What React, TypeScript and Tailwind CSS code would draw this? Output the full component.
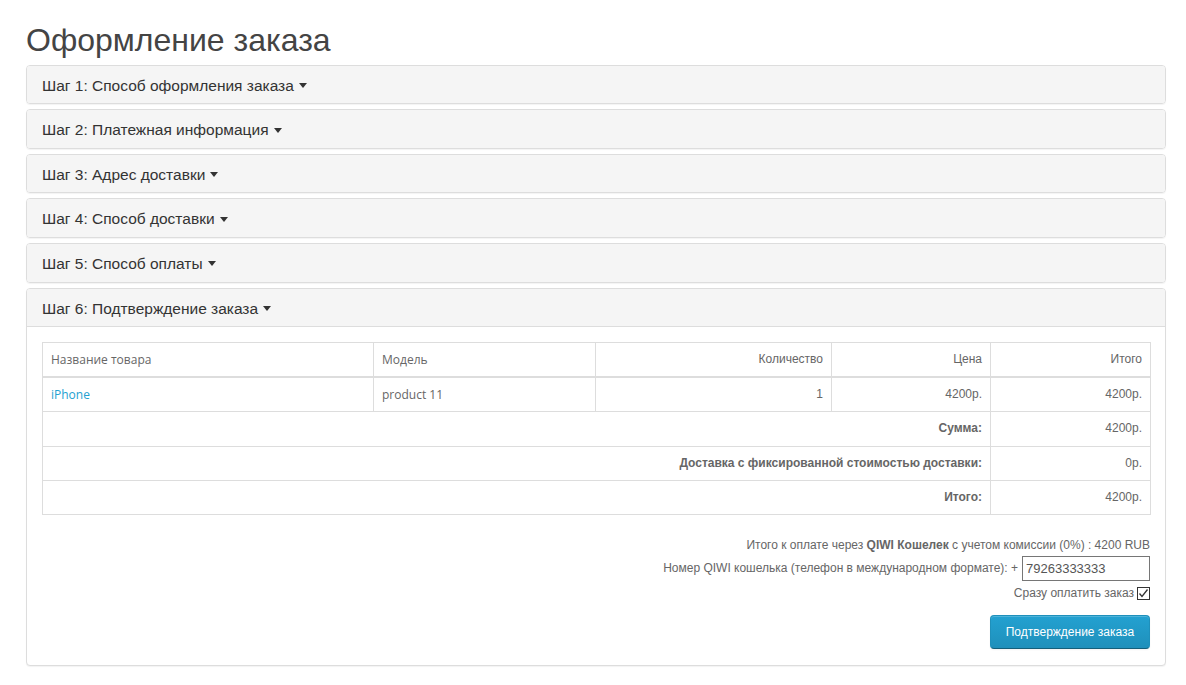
import React from "react";

const arial = { fontFamily: '"Liberation Sans", Arial, sans-serif' };

function Caret() {
  return (
    <span className="inline-block ml-[5px] align-middle w-0 h-0 border-l-[4px] border-r-[4px] border-t-[5px] border-l-transparent border-r-transparent border-t-[#333] relative top-[-1px]" />
  );
}

function PanelHeading({ title, last }: { title: string; last?: boolean }) {
  return (
    <div
      className={
        "bg-[#f5f5f5] px-[15px] py-[10px] rounded-t-[3px] " +
        (last ? "border-b border-[#ddd]" : "rounded-b-[3px]")
      }
    >
      <h4 className="text-[15.5px] leading-[17.6px] text-[#333] m-0 pt-[1px] h-[17.6px]">
        {title}
        <Caret />
      </h4>
    </div>
  );
}

const steps = [
  "Шаг 1: Способ оформления заказа",
  "Шаг 2: Платежная информация",
  "Шаг 3: Адрес доставки",
  "Шаг 4: Способ доставки",
  "Шаг 5: Способ оплаты",
];

const openSans = "font-['Open_Sans',sans-serif]";
const cell = "border border-[#ddd] p-[8px]";

export default function App() {
  return (
    <div
      className="w-[1186px] min-h-[685px] bg-white text-[12px] text-[#666]"
      style={arial}
    >
      <div className="pl-[26px] pr-[20px] pt-[21px]">
        <h1 className="text-[32px] leading-[39.6px] text-[#444] font-normal mb-[4px] ml-[0px]">
          Оформление заказа
        </h1>
        <div className="flex flex-col gap-[5px]">
          {steps.map((s) => (
            <div
              key={s}
              className="border border-[#ddd] rounded-[4px] shadow-[0_1px_1px_rgba(0,0,0,0.05)]"
            >
              <PanelHeading title={s} />
            </div>
          ))}
          <div className="border border-[#ddd] rounded-[4px] shadow-[0_1px_1px_rgba(0,0,0,0.05)] bg-white">
            <PanelHeading title="Шаг 6: Подтверждение заказа" last />
            <div className="p-[15px] pb-[16px]">
              <table className="w-full table-fixed border-collapse border border-[#ddd] mb-[20px] leading-[1.42857]">
                <colgroup>
                  <col className="w-[331px]" />
                  <col className="w-[222px]" />
                  <col className="w-[236px]" />
                  <col className="w-[159px]" />
                  <col className="w-[160px]" />
                </colgroup>
                <thead>
                  <tr>
                    <td className={cell + " border-b-2 text-left " + openSans}>Название товара</td>
                    <td className={cell + " border-b-2 text-left " + openSans}>Модель</td>
                    <td className={cell + " border-b-2 text-right"}>Количество</td>
                    <td className={cell + " border-b-2 text-right"}>Цена</td>
                    <td className={cell + " border-b-2 text-right"}>Итого</td>
                  </tr>
                </thead>
                <tbody>
                  <tr>
                    <td className={cell + " text-left " + openSans}>
                      <a className="text-[#23a1d1]" href="#">
                        iPhone
                      </a>
                    </td>
                    <td className={cell + " text-left " + openSans}>product 11</td>
                    <td className={cell + " text-right"}>1</td>
                    <td className={cell + " text-right"}>4200р.</td>
                    <td className={cell + " text-right"}>4200р.</td>
                  </tr>
                  <tr>
                    <td colSpan={4} className={cell + " text-right font-bold"}>
                      Сумма:
                    </td>
                    <td className={cell + " text-right"}>4200р.</td>
                  </tr>
                  <tr>
                    <td colSpan={4} className={cell + " text-right font-bold"}>
                      Доставка с фиксированной стоимостью доставки:
                    </td>
                    <td className={cell + " text-right"}>0р.</td>
                  </tr>
                  <tr>
                    <td colSpan={4} className={cell + " text-right font-bold"}>
                      Итого:
                    </td>
                    <td className={cell + " text-right"}>4200р.</td>
                  </tr>
                </tbody>
              </table>

              <div className="flex flex-col items-end">
                <div className="leading-[20px]">
                  Итого к оплате через <b>QIWI Кошелек</b> с учетом комиссии (0%) : 4200 RUB
                </div>
                <div className="flex items-center mt-[1px]">
                  <span>Номер QIWI кошелька (телефон в международном формате): +</span>
                  <div className="ml-[4px] w-[128px] h-[25px] border border-[#767676] flex items-center px-[3px] text-[13px] text-[#555]">
                    79263333333
                  </div>
                </div>
                <div className="flex items-center mt-[4px] h-[17px]">
                  <span>Сразу оплатить заказ</span>
                  <svg className="ml-[3px]" width="13" height="13" viewBox="0 0 13 13">
                    <rect x="0.5" y="0.5" width="12" height="12" fill="#fff" stroke="#333" />
                    <path d="M2.5 6.5 L5 9.5 L10.5 2.5" fill="none" stroke="#333" strokeWidth="1.3" />
                  </svg>
                </div>
                <button className="mt-[13px] w-[160px] h-[34px] rounded-[4px] text-white text-[12px] border border-[#1f90bb] border-b-[#145e7a] bg-[linear-gradient(to_bottom,#23a1d1,#1f90bb)] shadow-[inset_0_1px_0_rgba(255,255,255,0.2),0_1px_2px_rgba(0,0,0,0.05)]">
                  Подтверждение заказа
                </button>
              </div>
            </div>
          </div>
        </div>
      </div>
    </div>
  );
}
